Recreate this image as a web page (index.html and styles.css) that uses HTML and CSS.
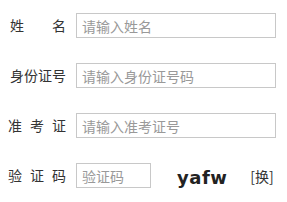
FILE: index.html
```html
<!DOCTYPE html>
<html lang="zh-CN">
<head>
    <meta charset="UTF-8">
    <meta name="viewport" content="width=device-width, initial-scale=1.0">
    <title>考生信息</title>
    <link rel="stylesheet" href="styles.css">
</head>
<body>
    <form class="login-form">
        <div class="form-row">
            <label class="label label-2"><span>姓</span><span>名</span></label>
            <input class="text-input" type="text" placeholder="请输入姓名">
        </div>
        <div class="form-row">
            <label class="label label-4"><span>身份证号</span></label>
            <input class="text-input" type="text" placeholder="请输入身份证号码">
        </div>
        <div class="form-row">
            <label class="label label-3"><span>准</span><span>考</span><span>证</span></label>
            <input class="text-input" type="text" placeholder="请输入准考证号">
        </div>
        <div class="form-row">
            <label class="label label-3"><span>验</span><span>证</span><span>码</span></label>
            <input class="text-input code-input" type="text" placeholder="验证码">
            <span class="captcha">yafw</span>
            <a class="refresh">[换]</a>
        </div>
    </form>
</body>
</html>
```

FILE: styles.css
```css
body {
    margin: 0;
    background-color: #fff;
    font-family: "Noto Sans CJK SC", "Noto Sans", sans-serif;
    font-size: 14px;
    color: #333;
}

.login-form {
    padding-top: 13px;
}

.form-row {
    display: flex;
    align-items: center;
    height: 25px;
    margin-bottom: 25px;
}

.form-row:last-child {
    margin-bottom: 0;
}

.label {
    display: flex;
    justify-content: flex-end;
    width: 66px;
    margin-right: 10px;
    line-height: 25px;
    color: #333;
}

.label-2 {
    gap: 28px;
}

.label-3 {
    gap: 8px;
}

.text-input {
    box-sizing: border-box;
    width: 200px;
    height: 25px;
    margin: 0;
    padding: 0 5px;
    border: 1px solid #c8c8c8;
    font-family: "Noto Sans CJK SC", "Noto Sans", sans-serif;
    font-size: 14px;
    color: #333;
    outline: none;
}

.text-input::placeholder {
    color: #999;
}

.code-input {
    width: 75px;
}

.captcha {
    margin-left: 26px;
    font-family: "DejaVu Sans", sans-serif;
    font-size: 18px;
    font-weight: bold;
    letter-spacing: 0.5px;
    color: #222;
    padding-top: 4px;
}

.refresh {
    margin-left: 23px;
    color: #333;
    cursor: pointer;
}
```
